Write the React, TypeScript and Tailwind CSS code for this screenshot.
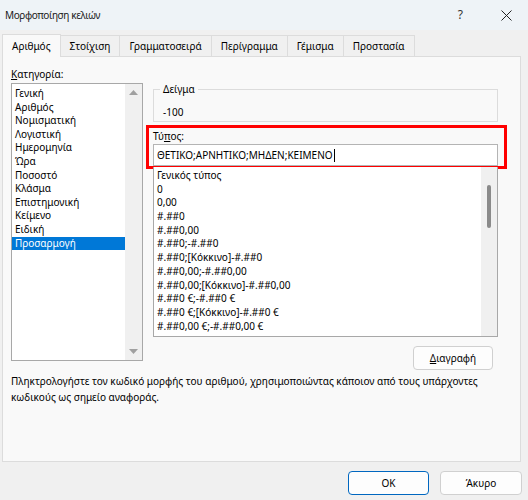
import React from "react";

const categories = [
  "Γενική",
  "Αριθμός",
  "Νομισματική",
  "Λογιστική",
  "Ημερομηνία",
  "Ώρα",
  "Ποσοστό",
  "Κλάσμα",
  "Επιστημονική",
  "Κείμενο",
  "Ειδική",
  "Προσαρμογή",
];

const formats = [
  "Γενικός τύπος",
  "0",
  "0,00",
  "#.##0",
  "#.##0,00",
  "#.##0;-#.##0",
  "#.##0;[Κόκκινο]-#.##0",
  "#.##0,00;-#.##0,00",
  "#.##0,00;[Κόκκινο]-#.##0,00",
  "#.##0 €;-#.##0 €",
  "#.##0 €;[Κόκκινο]-#.##0 €",
  "#.##0,00 €;-#.##0,00 €",
];

const tabs = ["Αριθμός", "Στοίχιση", "Γραμματοσειρά", "Περίγραμμα", "Γέμισμα", "Προστασία"];

export default function App() {
  return (
    <div
      className="flex h-[500px] w-[528px] flex-col overflow-hidden bg-[#f0f0f0] text-[10px] text-black"
      style={{ fontFamily: '"Segoe UI", "Noto Sans", "Open Sans", sans-serif' }}
    >
      {/* title bar */}
      <div className="flex h-[30px] shrink-0 items-center bg-[#eef3f7] pl-[5px]">
        <span className="text-[10px] tracking-[-0.4px] text-[#1a1a1a]">Μορφοποίηση κελιών</span>
        <span className="ml-auto mr-[38px] text-[12px] text-[#333]">?</span>
        <svg width="11" height="11" viewBox="0 0 11 11" className="mr-[16px]">
          <path d="M0.5 0.5 L10.5 10.5 M10.5 0.5 L0.5 10.5" stroke="#222" strokeWidth="1" />
        </svg>
      </div>

      {/* tabs */}
      <div className="flex h-[26px] items-end pl-[2px]">
        {tabs.map((t, i) =>
          i === 0 ? (
            <div
              key={t}
              className="relative z-10 -mb-px flex h-[23px] items-center border border-b-0 border-[#dcdcdc] bg-[#f9f9f9] px-[9px]"
            >
              {t}
            </div>
          ) : (
            <div
              key={t}
              className="flex h-[21px] items-center border border-b-0 border-l-0 border-[#dcdcdc] bg-[#f0f0f0] px-[9px]"
            >
              {t}
            </div>
          ),
        )}
      </div>

      {/* panel */}
      <div className="ml-[2px] flex h-[406px] w-[519px] flex-col border border-[#dcdcdc] bg-[#f9f9f9] pl-[8px]">
        <div className="flex">
          {/* category column */}
          <div className="flex w-[132px] flex-col pt-[8px]">
            <div className="h-[18px] leading-[18px]">
              <span className="underline">Κ</span>ατηγορία:
            </div>
            <div className="flex h-[278px] border border-[#a8a8a8] bg-white">
              <div className="flex flex-1 flex-col pt-[3px]">
                {categories.map((c) => (
                  <div
                    key={c}
                    className={
                      c === "Προσαρμογή"
                        ? "h-[13.6px] bg-[#0078d7] pl-[3px] leading-[13.6px] text-white"
                        : "h-[13.6px] pl-[3px] leading-[13.6px]"
                    }
                  >
                    {c}
                  </div>
                ))}
              </div>
              <div className="flex w-[17px] flex-col items-center justify-between bg-[#f0f0f0] py-[6px]">
                <svg width="9" height="5" viewBox="0 0 9 5">
                  <path d="M0 5 L4.5 0 L9 5 Z" fill="#a0a0a0" />
                </svg>
                <svg width="9" height="5" viewBox="0 0 9 5">
                  <path d="M0 0 L4.5 5 L9 0 Z" fill="#a0a0a0" />
                </svg>
              </div>
            </div>
          </div>

          {/* right column */}
          <div className="ml-[10px] flex w-[345px] flex-col pt-[25px]">
            <fieldset className="h-[40px] border border-[#dcdcdc] pl-[9px]">
              <legend className="ml-[-3px] px-[3px] leading-[14px]">Δείγμα</legend>
              <div className="pt-[8px] leading-[16px]">-100</div>
            </fieldset>

            <div className="ml-[-7px] mr-[-9px] mt-[3px] border-[3px] border-[#ff0000] pl-[4px] pr-[6px]">
              <div className="h-[16px] leading-[16px]">
                Τύ<span className="underline">π</span>ος:
              </div>
              <div className="flex h-[22px] items-center border border-[#b4b4b4] bg-white pl-[3px]">
                ΘΕΤΙΚΟ;ΑΡΝΗΤΙΚΟ;ΜΗΔΕΝ;ΚΕΙΜΕΝΟ
                <span className="ml-px h-[13px] w-px bg-black" />
              </div>
            </div>

            <div className="mt-[-2px] flex h-[170px] border border-t-0 border-[#a8a8a8] bg-white">
              <div className="flex flex-1 flex-col pl-[3px] pt-[2px]">
                {formats.map((f) => (
                  <div key={f} className="h-[13.7px] whitespace-nowrap leading-[13.7px]">
                    {f}
                  </div>
                ))}
              </div>
              <div className="flex w-[16px] flex-col items-center bg-[#f0f0f0] pt-[18px]">
                <div className="h-[43px] w-[4px] rounded-full bg-[#8a8a8a]" />
              </div>
            </div>

            <div className="mt-[9px] flex justify-end pr-[5px]">
              <button className="h-[24px] w-[80px] rounded-[4px] border border-[#d0d0d0] bg-[#fdfdfd]">
                <span className="underline">Δ</span>ιαγραφή
              </button>
            </div>
          </div>
        </div>

        <div className="mt-[3px] w-[490px] leading-[16px]">
          Πληκτρολογήστε τον κωδικό μορφής του αριθμού, χρησιμοποιώντας κάποιον από τους υπάρχοντες
          κωδικούς ως σημείο αναφοράς.
        </div>
      </div>

      {/* footer buttons */}
      <div className="flex justify-end gap-[11px] pr-[6px] pt-[9px]">
        <button className="h-[24px] w-[81px] rounded-[4px] border border-[#0067c0] bg-[#fdfdfd]">
          OK
        </button>
        <button className="h-[24px] w-[82px] rounded-[4px] border border-[#d0d0d0] bg-[#fdfdfd]">
          Άκυρο
        </button>
      </div>
    </div>
  );
}
